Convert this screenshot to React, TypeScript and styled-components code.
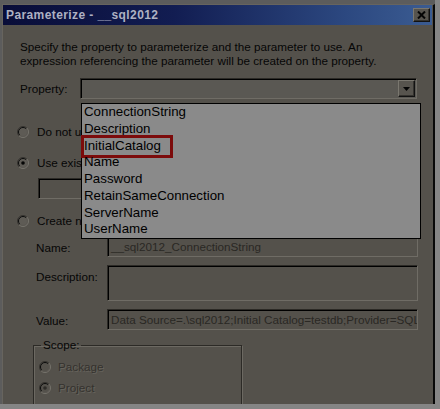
import React from "react";
import styled, { createGlobalStyle } from "styled-components";

const FONT = `"Liberation Sans", Arial, sans-serif`;

const GlobalStyle = createGlobalStyle`
  html, body { margin: 0; padding: 0; background: #858585; }
  body { font-family: ${FONT}; }
`;

const Screen = styled.div`
  width: 440px;
  height: 409px;
  background: #858585;
  overflow: hidden;
`;

const Backdrop = styled.div`
  width: 435px;
  height: 404px;
  box-sizing: border-box;
  padding: 4px 0 0 2px;
  background: #5c5c5c;
  display: flex;
`;

const Window = styled.div`
  flex: 1;
  display: flex;
  flex-direction: column;
  overflow: hidden;
  background: #54514b;
  border-top: 1px solid #67645e;
  border-left: 1px solid #67645e;
  border-right: 2px solid #080808;
`;

const TitleBar = styled.div`
  flex: none;
  height: 20px;
  margin-right: 1px;
  padding: 0 2px 0 3px;
  display: flex;
  align-items: center;
  justify-content: space-between;
  background: linear-gradient(90deg, #090d38 0%, #121d52 40%, #2c4880 80%, #3b5c92 100%);
`;

const TitleText = styled.span`
  color: #aeb1c3;
  font: bold 12px ${FONT};
  letter-spacing: 0.4px;
`;

const RaisedButton = styled.div<{ $w: number; $h: number }>`
  width: ${(p) => p.$w}px;
  height: ${(p) => p.$h}px;
  box-sizing: border-box;
  display: flex;
  align-items: center;
  justify-content: center;
  background: #57544e;
  border-top: 1px solid #7a776f;
  border-left: 1px solid #7a776f;
  border-right: 1px solid #121212;
  border-bottom: 1px solid #121212;
  box-shadow: inset -1px -1px 0 #35332f;
`;

const Content = styled.div`
  position: relative;
  flex: 1;
  display: flex;
  flex-direction: column;
  padding: 15px 15px 0 17px;
  font-size: 11.7px;
  line-height: 14px;
  color: #060606;
`;

const Intro = styled.p`
  margin: 0;
  white-space: nowrap;
`;

const PropertyRow = styled.div`
  margin-top: 10px;
  height: 21px;
  display: flex;
  align-items: center;
`;

const RowLabel = styled.span<{ $w: number }>`
  width: ${(p) => p.$w}px;
  flex: none;
`;

const Sunken = styled.div<{ $h: number; $fill?: string }>`
  position: relative;
  height: ${(p) => p.$h}px;
  box-sizing: border-box;
  background: ${(p) => p.$fill ?? "#54514b"};
  border-top: 1px solid #2c2a26;
  border-left: 1px solid #2c2a26;
  border-right: 1px solid #6f6c65;
  border-bottom: 1px solid #6f6c65;
  box-shadow: inset 1px 1px 0 #000;
  display: flex;
  align-items: center;
  padding: 0 2px 0 3px;
  overflow: hidden;
  white-space: nowrap;
`;

const Combo = styled(Sunken)`
  flex: 1;
  margin-right: 1px;
  justify-content: flex-end;
  padding: 1px 1px 1px 2px;
  align-items: stretch;
`;

const DropList = styled.ul`
  position: absolute;
  top: 78px;
  left: 78px;
  width: 340px;
  margin: 0;
  padding: 0 0 0 2px;
  box-sizing: border-box;
  list-style: none;
  background: #8a8a8a;
  border: 1px solid #000;
  font-size: 13.3px;
  line-height: 16.75px;
  color: #000;
  z-index: 5;
`;

const DropItem = styled.li<{ $marked?: boolean }>`
  position: relative;
  height: 16.75px;
  white-space: nowrap;
  &::after {
    content: "";
    display: ${(p) => (p.$marked ? "block" : "none")};
    position: absolute;
    left: -3px;
    top: -2.5px;
    width: 92px;
    height: 23px;
    box-sizing: border-box;
    border: 3px solid #7c0b0b;
  }
`;

const RadioRow = styled.div<{ $top: number; $gap?: number; $dim?: boolean }>`
  margin-top: ${(p) => p.$top}px;
  margin-left: -3px;
  height: 14px;
  display: flex;
  align-items: center;
  gap: ${(p) => p.$gap ?? 8}px;
  white-space: nowrap;
  color: ${(p) => (p.$dim ? "#34322e" : "#060606")};
  text-shadow: ${(p) => (p.$dim ? "1px 1px 0 #66635c" : "none")};
`;

const ExistingBox = styled(Sunken)`
  margin-top: 8px;
  margin-left: 18px;
  margin-right: 1px;
`;

const FieldGrid = styled.div`
  margin-top: 8px;
  margin-left: 16px;
  margin-right: 0;
  display: grid;
  grid-template-columns: 71px 311px;
  row-gap: 8px;
`;

const FieldLabel = styled.span`
  padding-top: 5px;
`;

const FieldText = styled.span`
  color: #2a2824;
`;

const ScopeGroup = styled.fieldset`
  margin: 8px 0 0 13px;
  width: 209px;
  height: 80px;
  box-sizing: border-box;
  padding: 8px 5px 0 5px;
  border: 1px solid #2c2a26;
  box-shadow: 1px 1px 0 #6c6962, inset 1px 1px 0 #6c6962;
  display: flex;
  flex-direction: column;
  gap: 7px;
`;

const ScopeLegend = styled.legend`
  margin-left: 2px;
  padding: 0 2px;
  line-height: 14px;
  color: #060606;
`;

const ScopeRow = styled(RadioRow)`
  margin-left: 0;
`;

function Radio({ checked, disabled }: { checked?: boolean; disabled?: boolean }) {
  return (
    <svg width="12" height="12" viewBox="0 0 12 12" style={{ flex: "none" }}>
      <circle cx="6" cy="6" r="5.5" fill={disabled ? "#54514b" : "#5e5b55"} />
      <path d="M2.1 9.9 A5.5 5.5 0 0 1 9.9 2.1" stroke="#35332f" strokeWidth="1" fill="none" />
      <path d="M9.9 2.1 A5.5 5.5 0 0 1 2.1 9.9" stroke="#77746d" strokeWidth="1" fill="none" />
      <path d="M2.8 9.2 A4.5 4.5 0 0 1 9.2 2.8" stroke="#0c0c0c" strokeWidth="1" fill="none" />
      <path d="M9.2 2.8 A4.5 4.5 0 0 1 2.8 9.2" stroke="#5a5751" strokeWidth="1" fill="none" />
      {checked && <circle cx="6" cy="6" r="1.8" fill={disabled ? "#2e2c28" : "#050505"} />}
    </svg>
  );
}

const items = [
  "ConnectionString",
  "Description",
  "InitialCatalog",
  "Name",
  "Password",
  "RetainSameConnection",
  "ServerName",
  "UserName",
];

export default function App() {
  return (
    <Screen>
      <GlobalStyle />
      <Backdrop>
        <Window>
          <TitleBar>
            <TitleText>Parameterize - __sql2012</TitleText>
            <RaisedButton $w={17} $h={14}>
              <svg width="9" height="8" viewBox="0 0 9 8">
                <path d="M1 0.5 L8 7.5 M8 0.5 L1 7.5" stroke="#050505" strokeWidth="2" />
              </svg>
            </RaisedButton>
          </TitleBar>
          <Content>
            <Intro>
              Specify the property to parameterize and the parameter to use. An
              <br />
              expression referencing the parameter will be created on the property.
            </Intro>
            <PropertyRow>
              <RowLabel $w={60}>Property:</RowLabel>
              <Combo $h={21} $fill="#5a5853">
                <RaisedButton $w={17} $h={17}>
                  <svg width="7" height="4" viewBox="0 0 7 4">
                    <path d="M0 0 H7 L3.5 4 Z" fill="#050505" />
                  </svg>
                </RaisedButton>
              </Combo>
            </PropertyRow>
            <DropList>
              {items.map((it) => (
                <DropItem key={it} $marked={it === "InitialCatalog"}>
                  {it}
                </DropItem>
              ))}
            </DropList>
            <RadioRow $top={26}>
              <Radio />
              <span>Do not use parameter</span>
            </RadioRow>
            <RadioRow $top={17}>
              <Radio checked />
              <span>Use existing parameter</span>
            </RadioRow>
            <ExistingBox $h={21} />
            <RadioRow $top={15}>
              <Radio />
              <span>Create new parameter</span>
            </RadioRow>
            <FieldGrid>
              <FieldLabel>Name:</FieldLabel>
              <Sunken $h={21}>
                <FieldText>__sql2012_ConnectionString</FieldText>
              </Sunken>
              <FieldLabel>Description:</FieldLabel>
              <Sunken $h={36} />
              <FieldLabel>Value:</FieldLabel>
              <Sunken $h={21}>
                <FieldText>Data Source=.\sql2012;Initial Catalog=testdb;Provider=SQLNCLI11.1;Integrated Security=SSPI;</FieldText>
              </Sunken>
            </FieldGrid>
            <ScopeGroup>
              <ScopeLegend>Scope:</ScopeLegend>
              <ScopeRow $top={0} $gap={7} $dim>
                <Radio disabled />
                <span>Package</span>
              </ScopeRow>
              <ScopeRow $top={0} $gap={7} $dim>
                <Radio checked disabled />
                <span>Project</span>
              </ScopeRow>
            </ScopeGroup>
          </Content>
        </Window>
      </Backdrop>
    </Screen>
  );
}
